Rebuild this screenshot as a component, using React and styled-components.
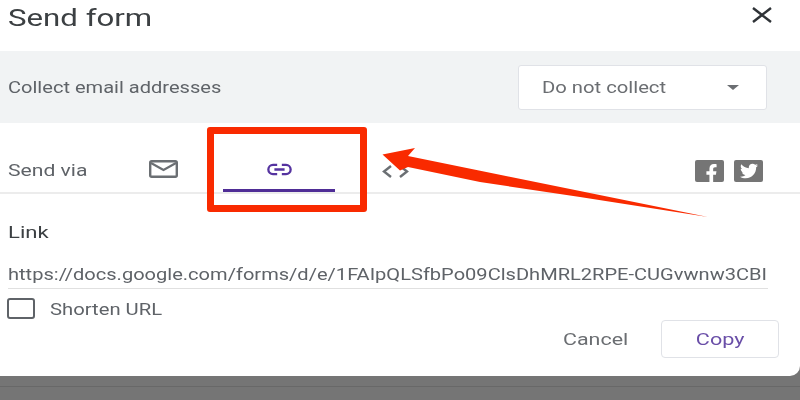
import React from 'react'
import styled, { createGlobalStyle, css } from 'styled-components'
import { FaFacebookF, FaTwitter } from 'react-icons/fa'

const Global = createGlobalStyle`
  html, body { margin: 0; padding: 0; background: #757575; }
  body { font-family: Roboto, "Liberation Sans", sans-serif; }
`

// the screenshot was stretched sideways, so the text is widened to follow it
const wide = css`
  display: inline-block;
  white-space: nowrap;
  transform: scaleX(${p => p.$x || 1.19});
  transform-origin: ${p => p.$origin || 'left'} center;
`

const Page = styled.div`
  position: relative;
  width: 800px;
  height: 400px;
  overflow: hidden;
  background: #757575;
  filter: blur(0.4px);
`

const Backdrop = styled.div`
  height: 386px;
  border-bottom: 1px solid #686868;
`

const Dialog = styled.div`
  position: absolute;
  top: 0;
  left: 0;
  width: 800px;
  height: 376px;
  background: #fff;
  border-bottom-right-radius: 10px;
  display: flex;
  flex-direction: column;
`

const TitleRow = styled.div`
  height: 51px;
  display: flex;
  align-items: flex-start;
  justify-content: space-between;
  padding: 0 28px 0 8px;
  box-sizing: border-box;
`

const Title = styled.h1`
  ${wide}
  margin: 2px 0 0;
  font-size: 24px;
  line-height: 32px;
  font-weight: 400;
  color: #3c4043;
`

const CloseIcon = styled.svg`
  width: 20px;
  height: 16px;
  margin-top: 7px;
`

const CollectBand = styled.div`
  height: 72px;
  background: #f1f3f4;
  display: flex;
  align-items: center;
  justify-content: space-between;
  padding: 0 33px 0 8px;
  box-sizing: border-box;
`

const CollectLabel = styled.span`
  ${wide}
  font-size: 17px;
  color: #5f6368;
`

const Select = styled.div`
  width: 249px;
  height: 45px;
  box-sizing: border-box;
  background: #fff;
  border: 1px solid #e0e2e7;
  border-radius: 3px;
  display: flex;
  align-items: center;
  justify-content: space-between;
  padding: 0 27px 0 23px;
`

const SelectValue = styled.span`
  ${wide}
  font-size: 17px;
  color: #6b6e72;
`

const Caret = styled.span`
  width: 0;
  height: 0;
  border-left: 6px solid transparent;
  border-right: 6px solid transparent;
  border-top: 5px solid #6b6e72;
`

const SendRow = styled.div`
  height: 71px;
  box-sizing: border-box;
  border-bottom: 2px solid #ececec;
  display: flex;
  align-items: flex-start;
  padding: 0 37px 0 8px;
`

const SendLabel = styled.span`
  width: 140px;
  margin-top: 38px;
  font-size: 16px;
  line-height: 20px;
  color: #5f6368;
  span {
    ${wide}
  }
`

const MailTab = styled.div`
  width: 30px;
  padding-top: 37px;
  display: flex;
  justify-content: center;
`

const LinkTab = styled.div`
  width: 112px;
  height: 69px;
  margin-left: 45px;
  box-sizing: border-box;
  padding-top: 40px;
  display: flex;
  justify-content: center;
  border-bottom: 3px solid #4f2d96;
`

const CodeTab = styled.div`
  margin-left: 47px;
  padding-top: 40px;
`

const Socials = styled.div`
  margin-left: auto;
  margin-top: 37px;
  display: flex;
  gap: 10px;
`

const Social = styled.div`
  width: 29px;
  height: 22px;
  border-radius: 2px;
  background: #757575;
  color: #fff;
  display: flex;
  align-items: center;
  justify-content: center;
  overflow: hidden;
  font-size: ${p => p.$size}px;
`

const Body = styled.div`
  padding: 28px 0 0 8px;
`

const LinkLabel = styled.div`
  font-size: 17px;
  line-height: 20px;
  color: #3c4043;
  span {
    ${wide}
  }
`

const UrlField = styled.div`
  width: 760px;
  height: 36px;
  margin-top: 11px;
  padding-top: 8px;
  box-sizing: border-box;
  border-bottom: 1px solid #e0e0e0;
  font-size: 17px;
  line-height: 26px;
  color: #5f6368;
`

const UrlText = styled.span`
  ${wide}
`

const CheckRow = styled.label`
  display: flex;
  align-items: center;
  gap: 15px;
  margin: 9px 0 0 -1px;
  font-size: 17px;
  color: #5f6368;
`

const CheckBox = styled.span`
  width: 28px;
  height: 21px;
  box-sizing: border-box;
  border: 2px solid #5f6368;
  border-radius: 3px;
`

const CheckText = styled.span`
  ${wide}
`

const Actions = styled.div`
  display: flex;
  justify-content: flex-end;
  align-items: center;
  gap: 34px;
  padding-right: 21px;
  margin-top: 1px;
`

const CancelButton = styled.span`
  ${wide}
  width: 64px;
  font-size: 17px;
  color: #6b6e72;
`

const CopyButton = styled.div`
  width: 118px;
  height: 38px;
  box-sizing: border-box;
  border: 1px solid #e0e2e7;
  border-radius: 4px;
  display: flex;
  align-items: center;
  justify-content: center;
`

const CopyText = styled.span`
  ${wide}
  font-size: 17px;
  color: #6a4fa8;
`

const Highlight = styled.div`
  position: absolute;
  left: 207px;
  top: 127px;
  width: 160px;
  height: 85px;
  box-sizing: border-box;
  border: 7px solid #f92a00;
  border-radius: 3px;
`

const ArrowOverlay = styled.svg`
  position: absolute;
  left: 0;
  top: 0;
  width: 800px;
  height: 400px;
  pointer-events: none;
`

export default function App() {
  return (
    <Page>
      <Global />
      <Backdrop />
      <Dialog>
        <TitleRow>
          <Title $x={1.3}>Send form</Title>
          <CloseIcon viewBox="0 0 20 16">
            <path d="M1 1 L19 15 M19 1 L1 15" stroke="#2f3337" strokeWidth="2.4" fill="none" />
          </CloseIcon>
        </TitleRow>
        <CollectBand>
          <CollectLabel $x={1.18}>Collect email addresses</CollectLabel>
          <Select>
            <SelectValue $x={1.19}>Do not collect</SelectValue>
            <Caret />
          </Select>
        </CollectBand>
        <SendRow>
          <SendLabel $x={1.32}><span>Send via</span></SendLabel>
          <MailTab>
            <svg width="29" height="18" viewBox="0 0 29 18">
              <rect x="1.2" y="1.2" width="26.6" height="15.6" rx="1.5" fill="none" stroke="#6b6f73" strokeWidth="2.4" />
              <path d="M2 3 L14.5 10 L27 3" fill="none" stroke="#6b6f73" strokeWidth="2.2" />
            </svg>
          </MailTab>
          <LinkTab>
            <svg width="29" height="13" viewBox="0 0 29 14">
              <path d="M12 2 H7.5 a5 5 0 0 0 0 10 H12 M17 2 H21.5 a5 5 0 0 1 0 10 H17 M9 7 H20" fill="none" stroke="#5533a0" strokeWidth="2.5" />
            </svg>
          </LinkTab>
          <CodeTab>
            <svg width="27" height="13" viewBox="0 0 27 13">
              <path d="M9 1 L2 6.5 L9 12 M18 1 L25 6.5 L18 12" fill="none" stroke="#6b6f73" strokeWidth="2.4" />
            </svg>
          </CodeTab>
          <Socials>
            <Social $size={19}><FaFacebookF style={{ marginTop: 4, marginLeft: 4 }} /></Social>
            <Social $size={18}><FaTwitter /></Social>
          </Socials>
        </SendRow>
        <Body>
          <LinkLabel $x={1.3}><span>Link</span></LinkLabel>
          <UrlField>
            <UrlText $x={1.18}>https://docs.google.com/forms/d/e/1FAIpQLSfbPo09ClsDhMRL2RPE-CUGvwnw3CBI</UrlText>
          </UrlField>
          <CheckRow>
            <CheckBox />
            <CheckText $x={1.19}>Shorten URL</CheckText>
          </CheckRow>
          <Actions>
            <CancelButton $x={1.26}>Cancel</CancelButton>
            <CopyButton>
              <CopyText $x={1.27} $origin="center">Copy</CopyText>
            </CopyButton>
          </Actions>
        </Body>
      </Dialog>
      <Highlight />
      <ArrowOverlay viewBox="0 0 800 400">
        <polygon points="382.5,154.5 415,148 408,156 708,217 580,197 480,182 408,167 400,170.5" fill="#f92a00" />
      </ArrowOverlay>
    </Page>
  )
}
